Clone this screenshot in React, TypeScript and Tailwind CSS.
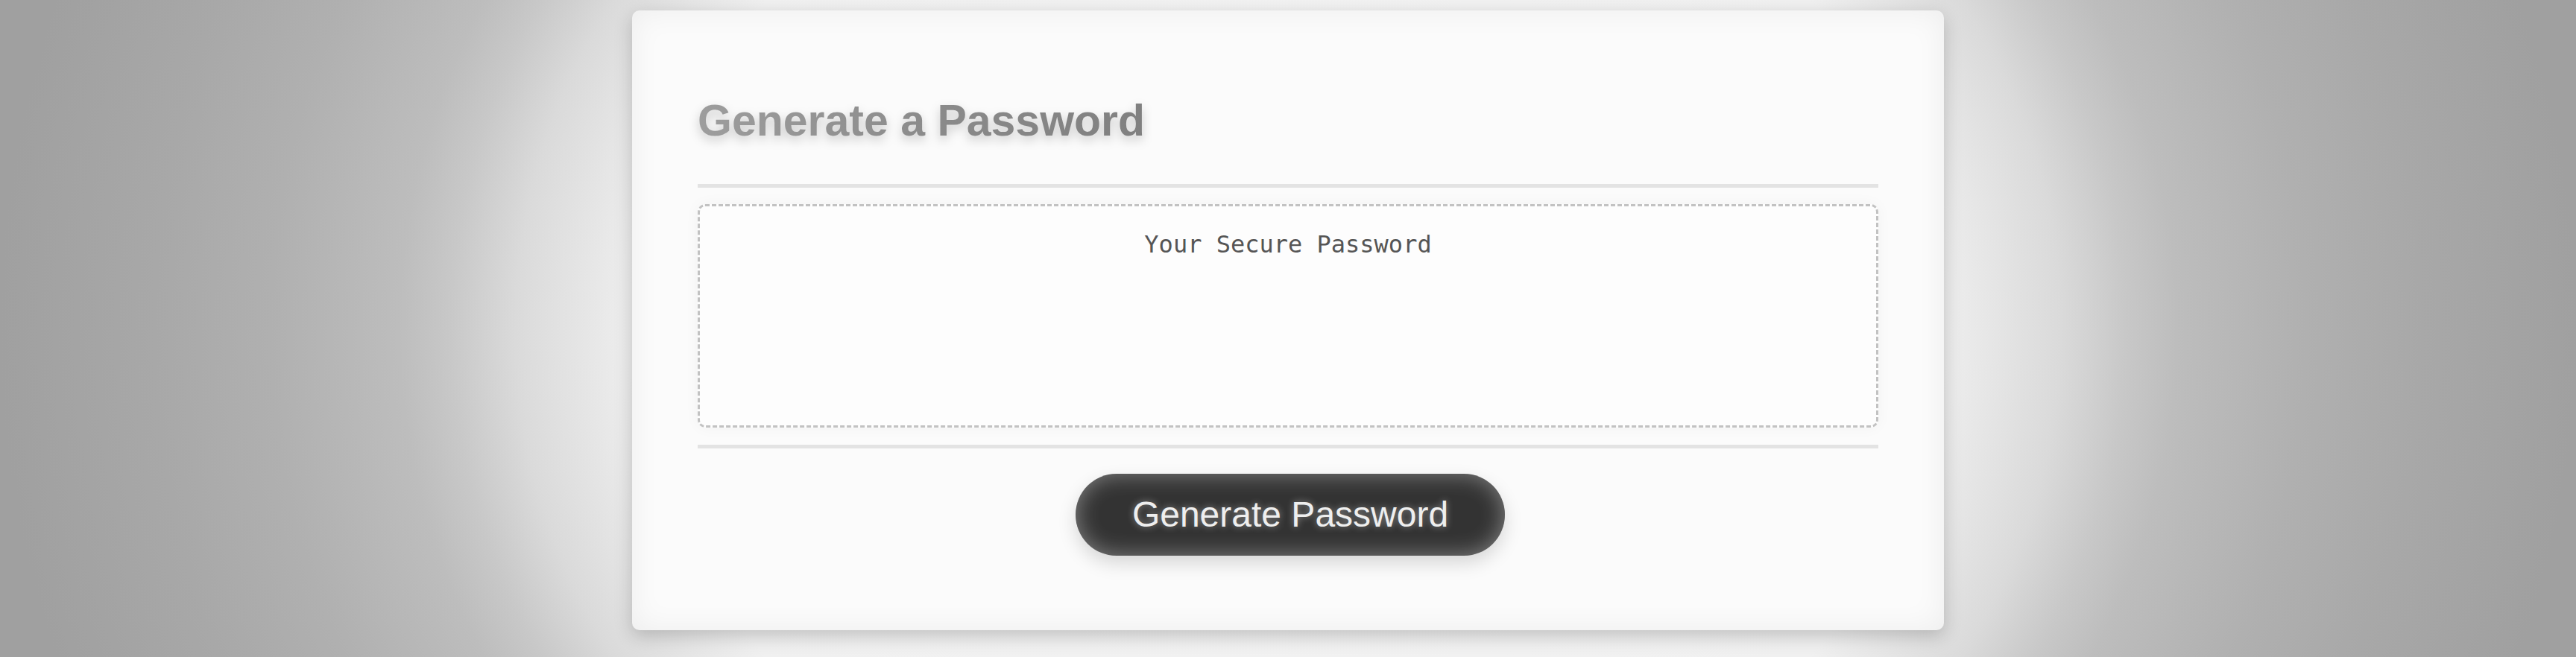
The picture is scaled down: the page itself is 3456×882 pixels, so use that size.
import React from "react";

export default function App() {
  return (
    <div className="w-[3456px] h-[882px] overflow-hidden bg-[radial-gradient(ellipse_1728px_1500px_at_50%_50%,#f3f3f3_0%,#f0f0f0_50%,#dadada_60%,#c8c8c8_65%,#bdbdbd_69%,#b0b0b0_79%,#a8a8a8_88%,#a0a0a0_100%)] flex justify-center pt-[14px] font-['Liberation_Sans',Arial,sans-serif]">
      <div className="w-[1760px] h-[832px] rounded-[10px] bg-[#fbfbfb] shadow-[0_8px_24px_rgba(0,0,0,0.2),inset_0_0_40px_rgba(0,0,0,0.06)] px-[88px] pt-[114px] flex flex-col">
        <h2 className="text-[59px] leading-[68px] font-bold [filter:drop-shadow(0_6px_7px_rgba(0,0,0,0.2))]">
          <span className="bg-[linear-gradient(90deg,#9d9d9d_0%,#8a8a8a_55%,#808080_100%)] bg-clip-text text-transparent">
            Generate a Password
          </span>
        </h2>
        <div className="mt-[51px] h-[5px] bg-[#e3e3e3]" />
        <div className="mt-[22px] h-[300px] rounded-[10px] border-[3px] border-dashed border-[#c2c2c2] bg-[#fdfdfd] shadow-[0_0_20px_rgba(0,0,0,0.04)] pt-[27px] text-center">
          <div className="font-['DejaVu_Sans_Mono',monospace] text-[32px] leading-[48px] text-[#555555]">
            Your Secure Password
          </div>
        </div>
        <div className="mt-[23px] h-[5px] bg-[#e3e3e3]" />
        <div className="mt-[34px] flex justify-center pl-[6px]">
          <button className="h-[110px] px-[76px] rounded-full bg-[#333333] text-[#eeeeee] text-[48px] leading-none shadow-[inset_0_0_30px_rgba(255,255,255,0.4),0_10px_24px_rgba(0,0,0,0.15)] [text-shadow:0_0_10px_rgba(255,255,255,0.45)]">
            Generate Password
          </button>
        </div>
      </div>
    </div>
  );
}
